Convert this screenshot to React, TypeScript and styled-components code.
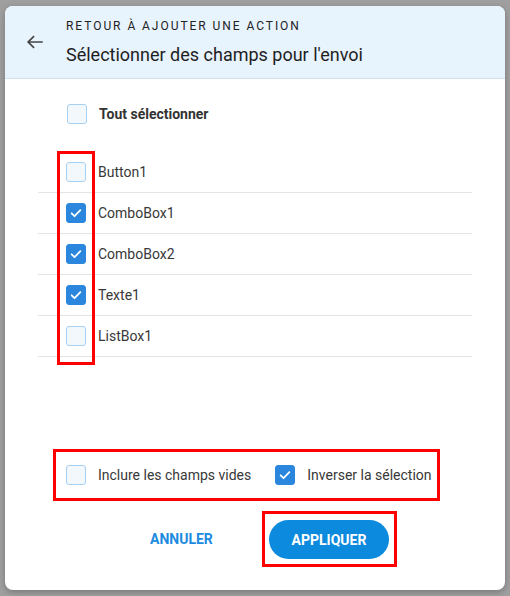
import React, { useState } from "react";
import styled, { createGlobalStyle } from "styled-components";

const GlobalStyle = createGlobalStyle`
  html, body {
    margin: 0;
    padding: 0;
    background: #9f9f9f;
    font-family: Roboto, "Liberation Sans", Arial, sans-serif;
  }
  * { box-sizing: border-box; }
`;

const fields = [
  { name: "Button1", checked: false },
  { name: "ComboBox1", checked: true },
  { name: "ComboBox2", checked: true },
  { name: "Texte1", checked: true },
  { name: "ListBox1", checked: false },
];

const Box = ({ checked, onClick }: { checked: boolean; onClick?: () => void }) => (
  <CheckBox $checked={checked} onClick={onClick}>
    {checked && (
      <svg width="14" height="14" viewBox="0 0 24 24">
        <path d="M4.5 12.5l5 5L19.5 7" fill="none" stroke="#fff" strokeWidth="3" strokeLinecap="round" strokeLinejoin="round" />
      </svg>
    )}
  </CheckBox>
);

const App: React.FC = () => {
  const [items, setItems] = useState(fields);
  const [includeEmpty, setIncludeEmpty] = useState(false);
  const [invert, setInvert] = useState(true);

  const toggle = (i: number) =>
    setItems(items.map((it, idx) => (idx === i ? { ...it, checked: !it.checked } : it)));

  return (
    <>
      <GlobalStyle />
      <Backdrop>
        <Dialog>
          <Header>
            <BackButton>
              <svg width="22" height="22" viewBox="0 0 24 24">
                <path d="M20.5 12H4.5M11 5.5L4.5 12l6.5 6.5" fill="none" stroke="#454545" strokeWidth="1.8" />
              </svg>
            </BackButton>
            <HeaderText>
              <Overline>RETOUR À AJOUTER UNE ACTION</Overline>
              <Title>Sélectionner des champs pour l'envoi</Title>
            </HeaderText>
          </Header>

          <Body>
            <SelectAll>
              <Box checked={false} />
              <BoldLabel>Tout sélectionner</BoldLabel>
            </SelectAll>

            <List>
              <Highlight />
              {items.map((it, i) => (
                <Row key={it.name}>
                  <Box checked={it.checked} onClick={() => toggle(i)} />
                  <Label>{it.name}</Label>
                </Row>
              ))}
            </List>

            <Spacer />

            <Options>
              <Option>
                <Box checked={includeEmpty} onClick={() => setIncludeEmpty(!includeEmpty)} />
                <Label>Inclure les champs vides</Label>
              </Option>
              <Option>
                <Box checked={invert} onClick={() => setInvert(!invert)} />
                <Label>Inverser la sélection</Label>
              </Option>
            </Options>

            <Actions>
              <TextButton>ANNULER</TextButton>
              <Outline>
                <PrimaryButton>APPLIQUER</PrimaryButton>
              </Outline>
            </Actions>
          </Body>
        </Dialog>
      </Backdrop>
    </>
  );
};

const Backdrop = styled.div`
  width: 510px;
  height: 596px;
  padding: 6px 5px 6px 5px;
`;

const Dialog = styled.div`
  width: 500px;
  height: 584px;
  background: #fff;
  border-radius: 8px;
  overflow: hidden;
  display: flex;
  flex-direction: column;
  box-shadow: 0 2px 6px rgba(0, 0, 0, 0.25);
`;

const Header = styled.div`
  height: 73px;
  flex-shrink: 0;
  background: #e7f3fd;
  border-bottom: 1px solid #d2e1ee;
  display: flex;
  align-items: center;
  padding-left: 18px;
`;

const BackButton = styled.div`
  width: 24px;
  height: 24px;
  display: flex;
  align-items: center;
  justify-content: center;
  margin-top: -1px;
`;

const HeaderText = styled.div`
  margin-left: 19px;
  display: flex;
  flex-direction: column;
  margin-top: 1px;
`;

const Overline = styled.div`
  font-size: 12px;
  letter-spacing: 1.95px;
  color: #222;
  line-height: 16px;
`;

const Title = styled.div`
  font-size: 18px;
  color: #1e1e1e;
  line-height: 24px;
  margin-top: 9px;
`;

const Body = styled.div`
  flex: 1;
  display: flex;
  flex-direction: column;
  padding: 0 33px 0 33px;
`;

const CheckBox = styled.div<{ $checked: boolean }>`
  width: 20px;
  height: 20px;
  flex-shrink: 0;
  border-radius: 3px;
  display: flex;
  align-items: center;
  justify-content: center;
  cursor: pointer;
  background: ${(p) => (p.$checked ? "#2b87de" : "#f3f8fd")};
  border: 1px solid ${(p) => (p.$checked ? "#2b87de" : "#a6d0f2")};
`;

const SelectAll = styled.div`
  display: flex;
  align-items: center;
  gap: 12px;
  padding-left: 29px;
  margin-top: 25px;
  height: 20px;
`;

const Label = styled.span`
  font-size: 14px;
  color: #383838;
`;

const BoldLabel = styled(Label)`
  font-weight: 700;
  color: #333;
`;

const List = styled.div`
  position: relative;
  margin-top: 28px;
`;

const Highlight = styled.div`
  position: absolute;
  left: 19px;
  top: -1px;
  width: 38px;
  height: 214px;
  border: 3px solid #ff0000;
  pointer-events: none;
`;

const Row = styled.div`
  height: 41px;
  display: flex;
  align-items: center;
  gap: 12px;
  padding-left: 28px;
  border-bottom: 1px solid #e4e4e4;
`;

const Spacer = styled.div`
  flex: 1;
`;

const Options = styled.div`
  align-self: flex-start;
  margin-left: 15px;
  width: 387px;
  height: 52px;
  border: 3px solid #ff0000;
  display: flex;
  align-items: center;
  padding-left: 10px;
  gap: 24px;
`;

const Option = styled.div`
  display: flex;
  align-items: center;
  gap: 12px;
`;

const Actions = styled.div`
  display: flex;
  align-items: center;
  margin-top: 10px;
  margin-bottom: 23px;
  padding-left: 112px;
`;

const TextButton = styled.button`
  border: none;
  background: none;
  font-family: inherit;
  font-size: 14px;
  font-weight: 700;
  color: #1c8ae0;
  padding: 0;
  width: 67px;
  text-align: left;
  cursor: pointer;
`;

const Outline = styled.div`
  margin-left: 45px;
  width: 135px;
  height: 56px;
  border: 3px solid #ff0000;
  padding: 6px 0 0 4px;
`;

const PrimaryButton = styled.button`
  width: 120px;
  height: 39px;
  border: none;
  border-radius: 20px;
  background: #0c8ade;
  color: #fff;
  font-family: inherit;
  font-size: 14px;
  font-weight: 700;
  cursor: pointer;
`;

export default App;
